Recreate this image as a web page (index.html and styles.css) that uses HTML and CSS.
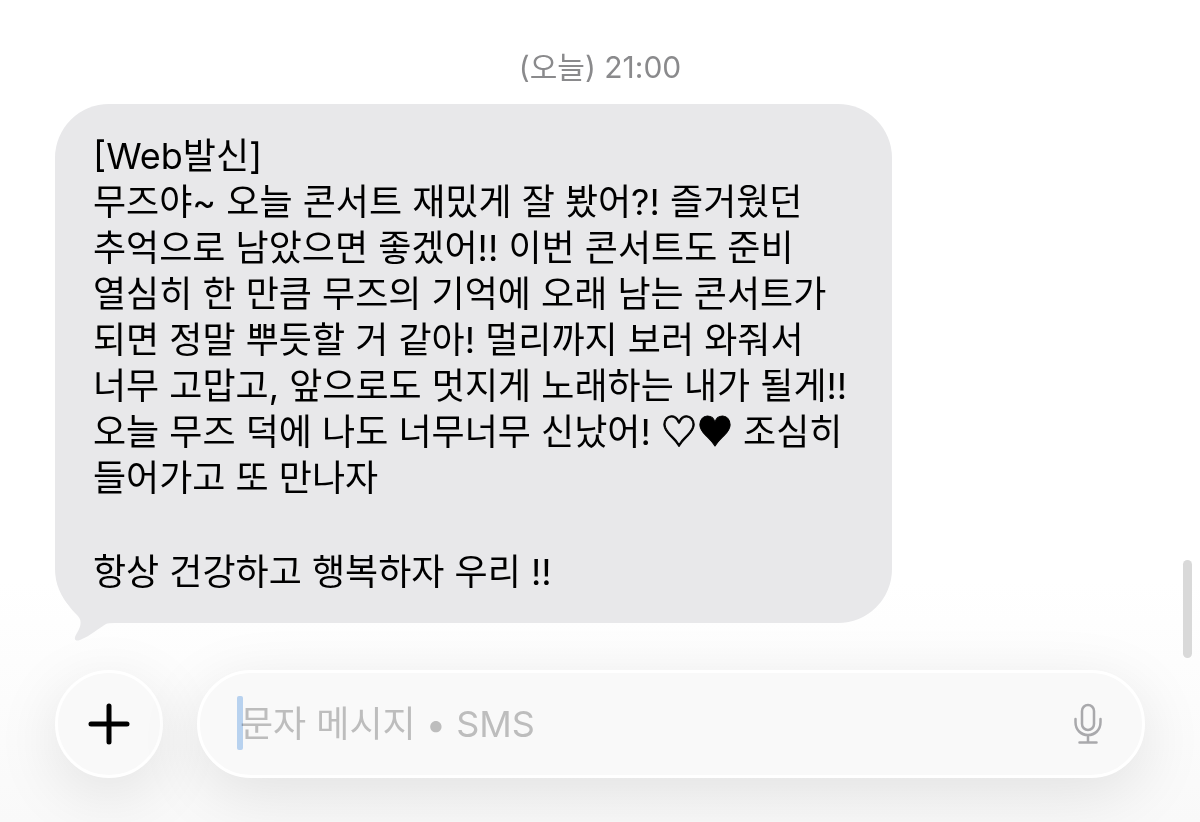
FILE: index.html
```html
<!DOCTYPE html>
<html lang="ko">
<head>
<meta charset="utf-8">
<meta name="viewport" content="width=device-width, initial-scale=1">
<title>메시지</title>
<link rel="stylesheet" href="styles.css">
</head>
<body>
<main class="chat">
  <section class="thread">
    <time class="stamp" datetime="21:00">(오늘) 21:00</time>
    <article class="bubble">
      <p class="text">[Web발신]<br>
무즈야~ 오늘 콘서트 재밌게 잘 봤어?! 즐거웠던<br>
추억으로 남았으면 좋겠어!! 이번 콘서트도 준비<br>
열심히 한 만큼 무즈의 기억에 오래 남는 콘서트가<br>
되면 정말 뿌듯할 거 같아! 멀리까지 보러 와줘서<br>
너무 고맙고, 앞으로도 멋지게 노래하는 내가 될게!!<br>
오늘 무즈 덕에 나도 너무너무 신났어! <span class="hearts">♡♥</span> 조심히<br>
들어가고 또 만나자</p>
      <p class="text">항상 건강하고 행복하자 우리 !!</p>
      <svg class="tail" viewBox="0 0 60 52" aria-hidden="true"><path d="M8 6C12 12.500 16 18 21 23C27 28 27 34 22 42C18 48 20 51 25 49C35 45 44 37 51 33Q53 32 60 32V10Z"/></svg>
    </article>
  </section>
  <form class="composer">
    <button class="add" type="button" aria-label="추가">
      <svg viewBox="0 0 42 42" aria-hidden="true"><path d="M21 3V39M3 21H39"/></svg>
    </button>
    <div class="field">
      <input class="input" type="text" aria-label="문자 메시지" placeholder="문자 메시지 • SMS">
      <span class="caret"></span>
      <button class="mic" type="button" aria-label="음성 입력">
        <svg viewBox="0 0 28 42" stroke-width="2.5" aria-hidden="true"><rect x="8" y="2" width="12" height="25" rx="6"/><path d="M1.500 16V19C1.500 27 7 32 14 32S26.500 27 26.500 19V16M14 32V39M5.500 39.500H22.500"/></svg>
      </button>
    </div>
  </form>
  <div class="scrollbar"></div>
</main>
</body>
</html>
```
FILE: styles.css
```css
* {
  box-sizing: border-box;
}

body {
  margin: 0;
  background: #fff;
  color: #000;
  font-family: Inter, "Noto Sans CJK KR", sans-serif;
}

.chat {
  position: relative;
  display: flex;
  flex-direction: column;
  min-height: 100vh;
  padding: 47px 55px 44px;
  overflow: hidden;
  background: linear-gradient(to top, #f9f9f9, #fff 240px);
}

.thread {
  display: flex;
  flex-direction: column;
  align-items: flex-start;
  gap: 17px;
}

.stamp {
  align-self: center;
  color: #8a8a8c;
  font-size: 30px;
  line-height: 40px;
}

.bubble {
  position: relative;
  display: flex;
  flex-direction: column;
  gap: 48px;
  max-width: 100%;
  padding: 29px 45px 28px 38px;
  border-radius: 54px;
  background: #e8e8ea;
}

.text {
  margin: 0;
  font-size: 36px;
  line-height: 46px;
}

.hearts {
  font-family: "Noto Sans CJK KR", sans-serif;
  line-height: 1;
  -webkit-text-stroke: 1px #000;
}

.tail {
  position: absolute;
  left: 0;
  bottom: -20px;
  width: 60px;
  height: 52px;
  fill: #e8e8ea;
}

.composer {
  display: flex;
  gap: 34px;
  margin-top: auto;
}

.add,
.field {
  height: 108px;
  border: 3px solid #fff;
  border-radius: 54px;
  background: #f9f9f9;
  box-shadow: 0 16px 64px rgba(0, 0, 0, 0.1);
}

.add {
  display: flex;
  flex: none;
  align-items: center;
  justify-content: center;
  width: 108px;
  padding: 0;
}

.add svg {
  width: 42px;
  height: 42px;
  fill: none;
  stroke: #000;
  stroke-width: 5;
  stroke-linecap: round;
}

.field {
  position: relative;
  display: flex;
  flex: 1;
  align-items: center;
  min-width: 0;
  padding: 0 40px;
}

.input {
  flex: 1;
  min-width: 0;
  height: 56px;
  padding: 0;
  border: 0;
  outline: 0;
  background: none;
  color: #000;
  font-family: inherit;
  font-size: 36px;
}

.input::placeholder {
  color: #bdbdbd;
  opacity: 1;
}

.caret {
  position: absolute;
  left: 37px;
  top: 23px;
  width: 6px;
  height: 54px;
  border-radius: 2px;
  background: #bdd7f5;
  mix-blend-mode: multiply;
}

.mic {
  display: flex;
  padding: 0;
  border: 0;
  background: none;
}

.mic svg {
  width: 28px;
  height: 42px;
  fill: none;
  stroke: #a9a9ac;
  stroke-linecap: round;
}

.scrollbar {
  position: absolute;
  right: 8px;
  bottom: 164px;
  width: 9px;
  height: 98px;
  border-radius: 5px;
  background: #d9d9d9;
}
```
